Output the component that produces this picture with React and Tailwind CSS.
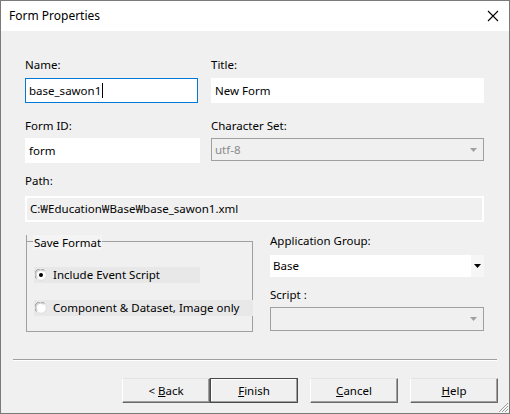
import React from 'react';

const font = { fontFamily: '"Noto Sans", "Noto Sans CJK KR", sans-serif' };

function Label({ children, className = '' }) {
  return <div className={`h-[16px] leading-[16px] text-[11.5px] text-black ${className}`}>{children}</div>;
}

function Arrow({ color = '#000' }) {
  return (
    <svg width="7" height="4" viewBox="0 0 7 4">
      <path d="M0 0h7L3.5 4z" fill={color} />
    </svg>
  );
}

function Radio({ checked }) {
  return (
    <svg width="12" height="12" viewBox="0 0 12 12" className="shrink-0">
      <circle cx="6" cy="6" r="5.5" fill="#fff" />
      <path d="M1.5 9.5A5 5 0 0 1 9.5 1.5" fill="none" stroke="#8a8a8a" strokeWidth="1" />
      <path d="M2.5 8.5A3.6 3.6 0 0 1 8.5 2.5" fill="none" stroke="#c8c8c8" strokeWidth="1" />
      <path d="M9.8 2.2A5.3 5.3 0 0 1 2.2 9.8" fill="none" stroke="#dcdcdc" strokeWidth="1" />
      {checked && <circle cx="6" cy="6" r="2" fill="#000" />}
    </svg>
  );
}

function Btn({ children, primary, className = '' }) {
  return (
    <button
      className={`h-[25px] w-[88px] text-[11.5px] text-black bg-[#f0f0f0] flex items-center justify-center ${
        primary
          ? 'border border-[#4a4a4a] shadow-[inset_-1px_-1px_0_#a0a0a0,inset_1px_1px_0_#ffffff]'
          : 'border border-t-[#e3e3e3] border-l-[#ffffff] border-b-[#696969] border-r-[#696969] shadow-[inset_-1px_-1px_0_#a0a0a0]'
      } ${className}`}
    >
      {children}
    </button>
  );
}

export default function App() {
  return (
    <div className="w-[510px] h-[414px] border border-[#7a7a7a] bg-[#f0f0f0] flex flex-col relative" style={font}>
      <div className="h-[30px] bg-white flex items-center justify-between pl-[8px] pr-[10px]">
        <span className="text-[12px] text-black">Form Properties</span>
        <svg width="12" height="12" viewBox="0 0 12 12">
          <path d="M1 1L11 11M11 1L1 11" stroke="#000" strokeWidth="1.1" />
        </svg>
      </div>

      <div className="pl-[24px] pt-[26px]">
        <div className="flex gap-[11px]">
          <div className="w-[175px]">
            <Label>Name:</Label>
            <div className="mt-[5px] h-[25px] w-[173px] border border-[#0078d7] bg-white flex items-center pl-[3px] text-[11.5px]">
              base_sawon1<span className="inline-block w-px h-[15px] bg-black ml-px" />
            </div>
            <Label className="mt-[15px]">Form ID:</Label>
            <div className="mt-[4px] h-[25px] bg-white flex items-center pl-[4px] text-[11.5px]">form</div>
          </div>
          <div className="w-[273px]">
            <Label>Title:</Label>
            <div className="mt-[5px] h-[25px] bg-white flex items-center pl-[4px] text-[11.5px]">New Form</div>
            <Label className="mt-[15px]">Character Set:</Label>
            <div className="mt-[4px] h-[23px] border border-[#a0a0a0] flex items-center justify-between pl-[3px] pr-[6px] text-[11.5px] text-[#8a8a8a]">
              <span>utf-8</span>
              <Arrow color="#a0a0a0" />
            </div>
          </div>
        </div>

        <Label className="mt-[10px]">Path:</Label>
        <div className="mt-[7px] h-[26px] w-[459px] border-2 border-white bg-[#f0f0f0] flex items-center pl-[3px] text-[11.5px]">
          C:₩Education₩Base₩base_sawon1.xml
        </div>

        <div className="mt-[11px] flex items-start gap-[17px]">
          <div className="ml-px w-[227px] pt-[8px]">
            <div className="relative h-[91px] border border-[#a0a0a0] pt-[25px] pl-[7px]">
              <div className="absolute -left-px -top-[7px] w-px h-[7px] bg-[#a0a0a0]" />
              <div className="absolute left-[6px] -top-[7px] h-[15px] px-[1px] bg-[#f4f4f4] text-[11.5px] leading-[15px]">
                Save Format
              </div>
              <div className="h-[16px] w-[166px] bg-[#e8e8e8] flex items-center gap-[6px] pl-[1px] text-[11.5px]">
                <Radio checked />
                <span>Include Event Script</span>
              </div>
              <div className="mt-[17px] h-[16px] w-[219px] bg-[#e8e8e8] flex items-center gap-[6px] pl-[1px] text-[11.5px]">
                <Radio />
                <span className="whitespace-nowrap">Component &amp; Dataset, Image only</span>
              </div>
            </div>
          </div>
          <div className="w-[214px]">
            <Label>Application Group:</Label>
            <div className="mt-[6px] h-[22px] bg-white flex items-center justify-between pl-[3px] text-[11.5px]">
              <span>Base</span>
              <div className="h-full w-[13px] bg-[#f6f6f6] flex items-center justify-center">
                <Arrow />
              </div>
            </div>
            <Label className="mt-[10px] text-[#a0a0a0]">Script :</Label>
            <div className="mt-[4px] h-[24px] border border-[#a0a0a0] flex items-center justify-end pr-[6px]">
              <Arrow color="#a0a0a0" />
            </div>
          </div>
        </div>
      </div>

      <div className="mt-[27px] mx-[12px] h-[2px] border-t border-[#a0a0a0] border-b border-b-white" />

      <div className="mt-[17px] flex justify-end pr-[11px]">
        <Btn>
          &lt;&nbsp;<u>B</u>ack
        </Btn>
        <Btn primary>
          <u>F</u>inish
        </Btn>
        <Btn className="ml-[12px]">
          <u>C</u>ancel
        </Btn>
        <Btn className="ml-[12px]">
          <u>H</u>elp
        </Btn>
      </div>

      <svg width="13" height="13" viewBox="0 0 13 13" className="absolute right-0 bottom-0">
        <path d="M12 3L3 12M12 6L6 12M12 9L9 12" stroke="#999" strokeWidth="1" />
        <path d="M12.5 4L4 12.5M12.5 7L7 12.5M12.5 10L10 12.5" stroke="#fff" strokeWidth="0.8" />
      </svg>
    </div>
  );
}
